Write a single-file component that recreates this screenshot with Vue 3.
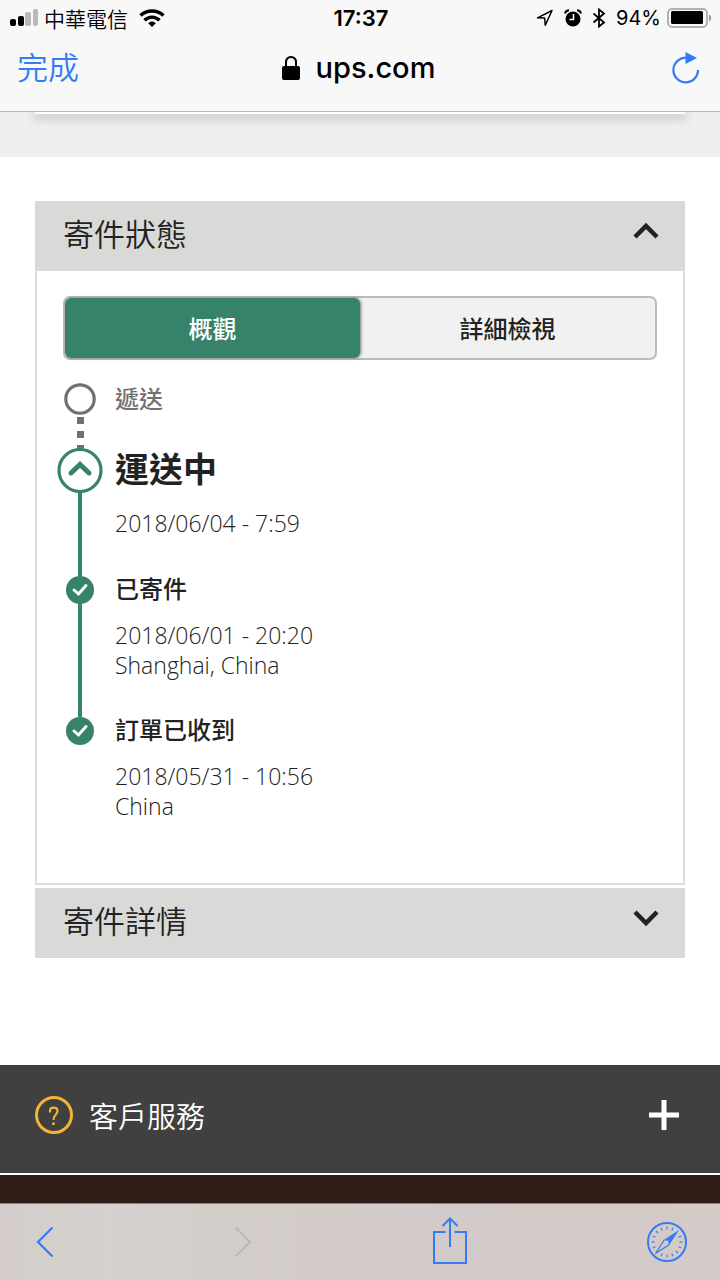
<script setup>
import { ref } from "vue";

const statusOpen = ref(true);
const activeTab = ref("overview");

const tabs = [
  { id: "overview", name: "概觀" },
  { id: "detail", name: "詳細檢視" },
];

// Shipment steps, newest first
const steps = [
  { id: 1, state: "next", title: "遞送", lines: [] },
  { id: 2, state: "current", title: "運送中", lines: ["2018/06/04 - 7:59"] },
  { id: 3, state: "passed", title: "已寄件", lines: ["2018/06/01 - 20:20", "Shanghai, China"] },
  { id: 4, state: "passed", title: "訂單已收到", lines: ["2018/05/31 - 10:56", "China"] },
];

// Angles of the compass ticks
const ticks = Array.from({ length: 16 }, (_, i) => i * 22.5).filter((a) => a !== 45 && a !== 225);
</script>

<template>
  <div class="page">
    <header class="browser">
      <div class="status">
        <div class="status-left">
          <svg class="signal" width="29" height="18" viewBox="0 0 29 18">
            <rect x="0" y="10" width="6" height="7" rx="2" />
            <rect x="8" y="7" width="6" height="10" rx="2" />
            <rect x="15" y="3" width="6" height="14" rx="2" fill="#b9b9b9" />
            <rect x="23" y="0" width="5" height="17" rx="2" fill="#b9b9b9" />
          </svg>
          <span class="carrier">中華電信</span>
          <svg class="wifi" width="26" height="18" viewBox="0 0 26 18" fill="none" stroke="#000" stroke-width="3.4">
            <path d="M1.500 6.500C8 0.500 18 0.500 24.500 6.500" />
            <path d="M5.500 11.300C10 7 16 7 20.500 11.300" />
            <path d="M9.200 14.300C11.500 12 14.500 12 16.800 14.300L13 18z" fill="#000" stroke="none" />
          </svg>
        </div>
        <span class="clock">17:37</span>
        <div class="status-right">
          <svg width="18" height="18" viewBox="0 0 18 18" fill="none" stroke="#000" stroke-width="1.5" stroke-linejoin="round">
            <path d="M16 1.5L1.5 8.8L8.6 9L9.3 16.3z" />
          </svg>
          <svg width="18" height="18" viewBox="0 0 18 18">
            <circle cx="9" cy="10" r="7.5" />
            <path d="M1 4.5C1.5 2.5 3 1.2 5 1.2M17 4.5C16.5 2.5 15 1.2 13 1.2" fill="none" stroke="#000" stroke-width="2" />
            <path d="M9.500 5V10.500H5.500" fill="none" stroke="#fff" stroke-width="1.500" />
          </svg>
          <svg width="14" height="20" viewBox="0 0 14 20" fill="none" stroke="#000" stroke-width="1.800">
            <path d="M1.500 5.500L12 14.500L7 18.500V1.500L12 5.500L1.500 14.500" />
          </svg>
          <span class="percent">94%</span>
          <svg class="battery" width="45" height="20" viewBox="0 0 45 20">
            <rect x="1" y="1" width="39" height="18" rx="4" fill="none" stroke="#999" stroke-width="1.500" />
            <rect x="4" y="3" width="32" height="13" rx="1.500" />
            <path d="M42 6.500C45 8 45 12 42 13.500z" fill="#999" />
          </svg>
        </div>
      </div>
      <div class="nav">
        <button class="done">完成</button>
        <div class="address">
          <svg width="18" height="24" viewBox="0 0 18 24">
            <rect x="0" y="10" width="18" height="14" rx="2" />
            <path d="M4 11V6.500C4 3 6 1 9 1S14 3 14 6.500V11" fill="none" stroke="#000" stroke-width="2" />
          </svg>
          <span>ups.com</span>
        </div>
        <button class="reload" aria-label="重新載入">
          <svg width="28" height="32" viewBox="0 0 28 32">
            <path d="M26 18A12.300 12.300 0 1 1 15 5.800" fill="none" stroke="#347cf6" stroke-width="2.200" />
            <path d="M13.500 0V12L25 6z" fill="#347cf6" />
          </svg>
        </button>
      </div>
    </header>

    <div class="band">
      <div class="band-card"></div>
    </div>

    <main class="content">
      <section class="panel">
        <button class="panel-head" :aria-expanded="statusOpen" @click="statusOpen = !statusOpen">
          <span>寄件狀態</span>
          <svg width="26" height="18" viewBox="0 0 26 18" fill="none" stroke="#222" stroke-width="4.500">
            <path d="M2 15L13 4L24 15" />
          </svg>
        </button>
        <div v-if="statusOpen" class="panel-body">
          <div class="tabs">
            <button
              v-for="tab in tabs"
              :key="tab.id"
              class="tab"
              :class="{ active: activeTab === tab.id }"
              @click="activeTab = tab.id"
            >
              {{ tab.name }}
            </button>
          </div>
          <ol class="steps">
            <li v-for="step in steps" :key="step.id" class="step" :class="step.state">
              <div class="track">
                <svg v-if="step.state === 'next'" width="32" height="32" viewBox="0 0 32 32">
                  <circle cx="16" cy="16" r="14.200" fill="#fff" stroke="#707070" stroke-width="3.200" />
                </svg>
                <svg v-else-if="step.state === 'current'" width="46" height="46" viewBox="0 0 46 46" fill="none" stroke="#37826b">
                  <circle cx="23" cy="22.500" r="21" fill="#fff" stroke-width="3.200" />
                  <path d="M23 43V46" stroke-width="4" />
                  <path d="M14 25L23 16.500L32 25" stroke-width="5" stroke-linecap="round" />
                </svg>
                <svg v-else width="28" height="28" viewBox="0 0 28 28">
                  <circle cx="14" cy="14" r="14" fill="#37826b" />
                  <path d="M8 14L12.500 18L20 9.500" fill="none" stroke="#fff" stroke-width="3" stroke-linecap="round" />
                </svg>
                <span class="line"></span>
              </div>
              <div class="info">
                <h3>{{ step.title }}</h3>
                <p v-for="text in step.lines" :key="text">{{ text }}</p>
              </div>
            </li>
          </ol>
        </div>
      </section>

      <section class="panel">
        <button class="panel-head" aria-expanded="false">
          <span>寄件詳情</span>
          <svg width="26" height="18" viewBox="0 0 26 18" fill="none" stroke="#222" stroke-width="4.500">
            <path d="M2 3L13 14L24 3" />
          </svg>
        </button>
      </section>
    </main>

    <footer class="footer">
      <button class="service">
        <svg width="38" height="38" viewBox="0 0 38 38" fill="none" stroke="#f5b335">
          <circle cx="19" cy="19" r="17.500" stroke-width="3" />
          <path d="M15 16.500V15C15 10.500 22.500 10.500 22.500 15C22.500 18.500 18.500 19 18.500 24" stroke-width="2.200" />
          <path d="M18.500 26.500V29" stroke-width="2.600" />
        </svg>
        <span>客戶服務</span>
        <svg width="32" height="32" viewBox="0 0 32 32" stroke="#fff" stroke-width="5">
          <path d="M16 1V31M1 16H31" />
        </svg>
      </button>
      <div class="strip"></div>
    </footer>

    <nav class="toolbar">
      <button aria-label="上一頁">
        <svg width="18" height="32" viewBox="0 0 18 32" fill="none" stroke="#347cf6" stroke-width="2.200">
          <path d="M16.500 1.500L2 16L16.500 30.500" />
        </svg>
      </button>
      <button aria-label="下一頁" disabled>
        <svg width="18" height="32" viewBox="0 0 18 32" fill="none" stroke="#bdb9b7" stroke-width="2.200">
          <path d="M1.500 1.500L16 16L1.500 30.500" />
        </svg>
      </button>
      <button aria-label="分享">
        <svg width="34" height="50" viewBox="0 0 34 50" fill="none" stroke="#347cf6" stroke-width="2">
          <path d="M12.500 15H1V46H33V15H21.500" />
          <path d="M17 30V1.500M9.500 9L17 1.500L24.500 9" />
        </svg>
      </button>
      <button aria-label="Safari">
        <svg width="40" height="40" viewBox="0 0 40 40">
          <circle cx="20" cy="20" r="19" fill="none" stroke="#347cf6" stroke-width="2" />
          <path v-for="a in ticks" :key="a" d="M20 4.500V7.500" stroke="#347cf6" stroke-width="1.200" :transform="`rotate(${a} 20 20)`" />
          <path d="M32 8L17.500 17.500L22.500 22.500z" fill="#347cf6" />
          <path d="M17.500 17.500L8.500 31.500L22.500 22.500" fill="none" stroke="#347cf6" stroke-width="1.300" />
          <circle cx="20" cy="20" r="1.500" fill="#d3cdcb" />
        </svg>
      </button>
    </nav>
  </div>
</template>

<style>
body {
  background: #fff;
}
</style>

<style scoped>
* {
  box-sizing: border-box;
}

.page {
  min-height: 100vh;
  display: flex;
  flex-direction: column;
  font-family: "Open Sans", "Noto Sans CJK TC", sans-serif;
  color: #222;
}

button {
  border: 0;
  padding: 0;
  background: none;
  font: inherit;
  color: inherit;
}

svg {
  display: block;
  flex: none;
}

/* Browser chrome */
.browser {
  background: #f8f8f8;
  border-bottom: 1px solid #b9b9b9;
  font-family: Inter, "Noto Sans CJK TC", sans-serif;
  color: #000;
}

.status,
.nav {
  display: grid;
  grid-template-columns: 1fr auto 1fr;
  align-items: center;
}

.status {
  height: 36px;
  padding: 0 8px 0 10px;
  font-size: 21px;
}

.status-left,
.status-right {
  display: flex;
  align-items: center;
}

.status-left {
  gap: 5px;
}

.carrier {
  font-weight: 350;
}

.wifi {
  margin-left: 6px;
}

.status-right {
  justify-content: flex-end;
  gap: 10px;
}

.percent {
  font-size: 20px;
}

.battery {
  margin-left: -4px;
}

.clock {
  font-size: 22px;
  font-weight: 600;
}

.nav {
  height: 75px;
  padding: 0 20px 12px 17px;
}

.done {
  justify-self: start;
  font-size: 31px;
  line-height: 40px;
  font-weight: 350;
  color: #347cf6;
}

.address {
  display: flex;
  align-items: center;
  gap: 16px;
  font-size: 29px;
  font-weight: 500;
}

.reload {
  justify-self: end;
}

/* Bottom edge of the card scrolled under the bar */
.band {
  height: 45px;
  padding: 0 35px;
  background: #efefee;
  overflow: hidden;
}

.band-card {
  height: 2px;
  background: #fff;
  box-shadow: 0 3px 8px 2px #c4c4c2;
}

/* Accordion */
.content {
  flex: 1;
  display: flex;
  flex-direction: column;
  gap: 3px;
  padding: 44px 35px 106px;
}

.panel-head {
  width: 100%;
  min-height: 70px;
  padding: 0 26px 8px 28px;
  display: flex;
  align-items: center;
  justify-content: space-between;
  background: #d9d9d7;
  font-size: 31px;
  font-weight: 350;
}

.panel-head svg {
  margin-bottom: 2px;
}

.panel-body {
  border: 2px solid #ddd;
  border-top: 0;
  padding: 25px 20px 62px;
}

.tabs {
  display: grid;
  grid-template-columns: 1fr 1fr;
  margin: 0 6px;
  border: 2px solid #bbb;
  border-radius: 7px;
  background: #f1f1f1;
}

.tab {
  height: 60px;
  padding-bottom: 2px;
  border-radius: 6px;
  font-size: 24px;
  font-weight: 500;
}

.tab.active {
  background: #37826b;
  color: #fff;
  box-shadow: 1px 0 3px #777;
}

/* Timeline */
.steps {
  list-style: none;
  margin: 23px 0 0;
  padding: 0;
}

.step {
  display: flex;
  gap: 12px;
}

.track {
  width: 46px;
  display: flex;
  flex-direction: column;
  align-items: center;
}

.line {
  flex: 1;
  width: 4px;
  background: #37826b;
}

.next .line {
  width: 7px;
  margin-top: 2px;
  background: repeating-linear-gradient(#707070 0 7px, transparent 7px 14px);
}

.step:last-child .line {
  background: none;
}

.info h3 {
  margin: 0 0 18px;
  font-size: 24px;
  line-height: 26px;
  font-weight: 500;
}

.info p {
  margin: 0;
  font-size: 23px;
  line-height: 30px;
  font-weight: 350;
}

.next .info {
  min-height: 65px;
}

.info .next h3,
.next h3 {
  line-height: 32px;
  color: #707070;
}

.current .info {
  min-height: 128px;
}

.current h3 {
  font-size: 34px;
  line-height: 42px;
  font-weight: 700;
}

.passed .info {
  min-height: 141px;
}

.passed:last-child .info {
  min-height: 104px;
}

/* Footer */
.service {
  width: 100%;
  height: 108px;
  padding: 0 40px 8px 35px;
  display: flex;
  align-items: center;
  gap: 16px;
  background: #404040;
  color: #fff;
  font-size: 29px;
  font-weight: 350;
}

.service span {
  flex: 1;
  text-align: left;
}

.strip {
  height: 30px;
  border-top: 2px solid #fff;
  background: #301c16;
}

.toolbar {
  height: 77px;
  padding: 0 33px 0 36px;
  display: flex;
  align-items: center;
  justify-content: space-between;
  border-top: 1px solid #8f8180;
  background: linear-gradient(90deg, #d4cdcb, #d6d1ce 15%, #d2cbc8 45%, #d4cac8);
}
</style>
